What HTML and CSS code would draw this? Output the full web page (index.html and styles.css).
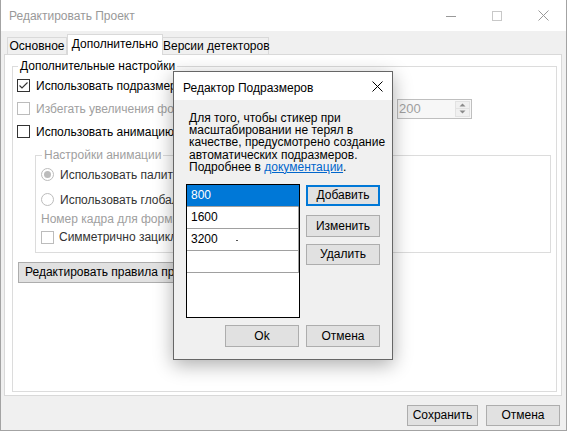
FILE: index.html
```html
<!DOCTYPE html>
<html lang="ru">
<head>
<meta charset="utf-8">
<title>Редактировать Проект</title>
<link rel="stylesheet" href="styles.css">
</head>
<body>
<div class="window">
  <div class="titlebar">
    <span class="title">Редактировать Проект</span>
    <div class="controls">
      <span class="ctl"><svg width="10" height="10" viewBox="0 0 10 10"><line x1="0" y1="5.5" x2="10" y2="5.5" stroke="#999" stroke-width="1"/></svg></span>
      <span class="ctl"><svg width="10" height="10" viewBox="0 0 10 10"><rect x="0.5" y="0.5" width="9" height="9" fill="none" stroke="#c8c8c8" stroke-width="1"/></svg></span>
      <span class="ctl"><svg width="11" height="11" viewBox="0 0 11 11"><path d="M0.5 0.5 L10.5 10.5 M10.5 0.5 L0.5 10.5" stroke="#999" stroke-width="1" fill="none"/></svg></span>
    </div>
  </div>
  <div class="client">
    <div class="tabs">
      <div class="tab t1">Основное</div>
      <div class="tab active t2">Дополнительно</div>
      <div class="tab t3">Версии детекторов</div>
    </div>
    <div class="panel">
      <fieldset class="group main-group">
        <legend>Дополнительные настройки</legend>
        <div class="group-body">
          <div class="row r1">
            <span class="cb"><svg width="13" height="13" viewBox="0 0 13 13"><path d="M2.5 6.5 L5 9 L10.5 3.5" stroke="#333" stroke-width="1.1" fill="none"/></svg></span>
            <span class="lbl clip c1">Использовать подразмеры</span>
          </div>
          <div class="row r2">
            <span class="cb disabled"></span>
            <span class="wide"><span class="lbl gray clip c1">Избегать увеличения фотографий меньше, чем</span></span>
            <div class="spin">
              <span class="spin-val">200</span>
              <div class="spin-btns">
                <span class="sb"><svg width="7" height="4" viewBox="0 0 7 4"><path d="M0.5 3.5 L3.5 0.5 L6.5 3.5 Z" fill="#8a8a8a"/></svg></span>
                <span class="sb"><svg width="7" height="4" viewBox="0 0 7 4"><path d="M0.5 0.5 L3.5 3.5 L6.5 0.5 Z" fill="#8a8a8a"/></svg></span>
              </div>
            </div>
          </div>
          <div class="row r3">
            <span class="cb"></span>
            <span class="lbl">Использовать анимацию</span>
          </div>
          <fieldset class="group anim-group">
            <legend>Настройки анимации</legend>
            <div class="anim-body">
              <div class="arow">
                <span class="radio on"></span>
                <span class="lbl dim clip c2">Использовать палитру первого кадра</span>
              </div>
              <div class="arow">
                <span class="radio"></span>
                <span class="lbl dim clip c2">Использовать глобальную палитру</span>
              </div>
              <div class="lrow gray clip c3">Номер кадра для формирования превью</div>
              <div class="crow">
                <span class="cb disabled small"></span>
                <span class="lbl dim clip c4">Симметрично зациклить анимацию</span>
              </div>
            </div>
          </fieldset>
          <button class="btn rules">Редактировать правила предпросмотра</button>
        </div>
      </fieldset>
    </div>
    <div class="footer">
      <button class="btn save">Сохранить</button>
      <button class="btn cancel">Отмена</button>
    </div>
  </div>

  <div class="dialog">
    <div class="dlg-title">
      <span class="dlg-caption">Редактор Подразмеров</span>
      <svg class="dlg-close" width="11" height="11" viewBox="0 0 11 11"><path d="M0.5 0.5 L10.5 10.5 M10.5 0.5 L0.5 10.5" stroke="#000" stroke-width="1" fill="none"/></svg>
    </div>
    <div class="dlg-body">
      <p class="dlg-text">Для того, чтобы стикер при<br>масштабировании не терял в<br>качестве, предусмотрено создание<br>автоматических подразмеров.<br>Подробнее в <a href="#" class="link">документации</a>.</p>
      <div class="dlg-main">
        <div class="listbox">
          <div class="item selected">800</div>
          <div class="item">1600</div>
          <div class="item">3200<span class="mark"></span></div>
          <div class="item"></div>
        </div>
        <div class="dlg-side">
          <button class="btn dbtn focused">Добавить</button>
          <button class="btn dbtn edit">Изменить</button>
          <button class="btn dbtn del">Удалить</button>
        </div>
      </div>
      <div class="dlg-bottom">
        <button class="btn dbtn ok">Ok</button>
        <button class="btn dbtn">Отмена</button>
      </div>
    </div>
  </div>
</div>
</body>
</html>
```
FILE: styles.css
```css
* { box-sizing: border-box; }
html, body { margin: 0; padding: 0; }
body {
  width: 567px;
  height: 431px;
  overflow: hidden;
  font-family: "Liberation Sans", Arial, sans-serif;
  font-size: 12px;
  color: #000;
  background: #fff;
}
.window {
  position: relative;
  width: 567px;
  height: 431px;
  border: 1px solid #a3a3a3;
  border-top: none;
  display: flex;
  flex-direction: column;
  background: #f0f0f0;
}
.titlebar {
  flex: none;
  height: 31px;
  background: #fff;
  display: flex;
  align-items: center;
}
.title {
  padding-left: 8px;
  color: #999;
  line-height: 14px;
}
.controls {
  margin-left: auto;
  align-self: stretch;
  display: flex;
}
.ctl {
  width: 46px;
  display: flex;
  align-items: center;
  justify-content: center;
}
.ctl svg { display: block; }

.client {
  flex: 1;
  display: flex;
  flex-direction: column;
  padding: 3px 4px 4px 3px;
}
.tabs {
  flex: none;
  height: 20px;
  display: flex;
  align-items: flex-end;
  padding-left: 3px;
}
.tab {
  height: 17px;
  border: 1px solid #d9d9d9;
  border-bottom: none;
  text-align: center;
  line-height: 16px;
  white-space: nowrap;
}
.tab.active {
  height: 21px;
  margin-bottom: -1px;
  background: #fff;
  line-height: 18px;
  position: relative;
  z-index: 1;
}
.t1 { width: 60px; }
.t2 { width: 96px; }
.t3 { width: 107px; margin-left: -1px; }

.panel {
  flex: none;
  height: 342px;
  background: #fff;
  border: 1px solid #d9d9d9;
  padding: 4px 4px 0 7px;
}
.group {
  margin: 0;
  padding: 0;
  min-width: 0;
  border: 1px solid #dcdcdc;
}
.group legend {
  padding: 0 2px;
  line-height: 14px;
}
.main-group { height: 333px; }
.main-group > legend { margin-left: 5px; }
.group-body {
  padding-left: 4px;
  padding-top: 1px;
  display: flex;
  flex-direction: column;
  align-items: flex-start;
}
.row {
  height: 23px;
  display: flex;
  align-items: center;
  align-self: stretch;
  white-space: nowrap;
}
.cb {
  flex: none;
  width: 13px;
  height: 13px;
  border: 1px solid #333;
  background: #fff;
  margin-right: 6px;
}
.cb svg { display: block; margin: -1px; }
.cb.disabled { border-color: #bcbcbc; }
.lbl { line-height: 14px; }
.clip {
  display: block;
  overflow: hidden;
  white-space: nowrap;
}
.c1 { max-width: 137px; }
.c2 { max-width: 113px; }
.c3 { max-width: 132px; }
.c4 { max-width: 115px; }
.gray { color: #a0a0a0; }
.dim { color: #333; }
.wide {
  flex: 0 0 361px;
}
.spin {
  width: 75px;
  height: 20px;
  border: 1px solid #bfbfbf;
  background: #f7f7f7;
  display: flex;
  align-items: center;
}
.spin-val {
  flex: 1;
  padding-left: 1px;
  color: #a0a0a0;
  font-size: 13px;
}
.spin-btns {
  align-self: stretch;
  width: 16px;
  display: flex;
  flex-direction: column;
  padding: 1px 1px 1px 0;
}
.sb {
  flex: 1;
  display: flex;
  align-items: center;
  justify-content: center;
  border: 1px solid #e2e2e2;
  background: #f0f0f0;
}
.sb + .sb { border-top: none; }
.sb svg { display: block; }

.anim-group {
  align-self: stretch;
  margin: 5px 5px 0 18px;
  height: 105px;
}
.anim-group > legend { margin-left: 6px; color: #a0a0a0; }
.anim-body { padding-left: 5px; }
.arow {
  height: 25px;
  display: flex;
  align-items: center;
  white-space: nowrap;
}
.radio {
  flex: none;
  width: 13px;
  height: 13px;
  border: 1px solid #bcbcbc;
  border-radius: 50%;
  background: #fff;
  margin-right: 6px;
  display: flex;
  align-items: center;
  justify-content: center;
}
.radio.on::after {
  content: "";
  width: 7px;
  height: 7px;
  border-radius: 50%;
  background: #bcbcbc;
}
.lrow {
  height: 14px;
  line-height: 14px;
}
.crow {
  height: 22px;
  display: flex;
  align-items: center;
  white-space: nowrap;
}
.cb.small { margin-right: 5px; }

.btn {
  font-family: inherit;
  font-size: 12px;
  color: #000;
  background: #e1e1e1;
  border: 1px solid #adadad;
  padding: 0;
  margin: 0;
  height: 21px;
  line-height: 17px;
  white-space: nowrap;
}
.rules {
  margin: 9px 0 0 1px;
  width: 162px;
  overflow: hidden;
  text-align: left;
  padding-left: 6px;
}
.footer {
  flex: none;
  display: flex;
  justify-content: flex-end;
  gap: 8px;
  margin-top: 9px;
  padding-right: 2px;
}
.save { width: 71px; }
.cancel { width: 74px; }

.dialog {
  position: absolute;
  left: 172px;
  top: 71px;
  width: 220px;
  height: 289px;
  border: 1px solid #666;
  background: #f0f0f0;
  box-shadow: 0 5px 18px rgba(0, 0, 0, 0.32);
  display: flex;
  flex-direction: column;
  z-index: 5;
}
.dlg-title {
  flex: none;
  height: 28px;
  background: #fff;
  display: flex;
  align-items: center;
  padding-left: 9px;
}
.dlg-caption {
  margin-top: 4px;
  line-height: 14px;
  white-space: nowrap;
}
.dlg-close {
  display: block;
  margin-left: auto;
  margin-right: 9px;
}
.dlg-body {
  flex: 1;
  padding: 12px;
  display: flex;
  flex-direction: column;
}
.dlg-text {
  margin: 0 0 11px 3px;
  line-height: 12.2px;
  white-space: nowrap;
}
.link { color: #0066cc; text-decoration: underline; }
.dlg-main {
  display: flex;
  gap: 6px;
}
.listbox {
  flex: none;
  width: 114px;
  height: 134px;
  border: 1px solid #000;
  background: #fff;
}
.item {
  height: 22px;
  line-height: 21px;
  padding-left: 4px;
  border-bottom: 1px solid #a0a0a0;
  border-right: 1px solid #a0a0a0;
  display: flex;
  align-items: center;
}
.item.selected {
  background: #0078d7;
  color: #fff;
  border-right-color: #0078d7;
}
.mark {
  width: 2px;
  height: 1px;
  margin-left: 18px;
  margin-top: 2px;
  background: #555;
}
.dlg-side {
  display: flex;
  flex-direction: column;
  padding-top: 1px;
}
.dbtn { width: 74px; }
.focused { border: 2px solid #0078d7; }
.edit { margin-top: 9px; height: 22px; }
.del { margin-top: 7px; }
.dlg-bottom {
  margin-top: 7px;
  display: flex;
  justify-content: flex-end;
  gap: 7px;
}
.dlg-bottom .btn { height: 22px; }
```
